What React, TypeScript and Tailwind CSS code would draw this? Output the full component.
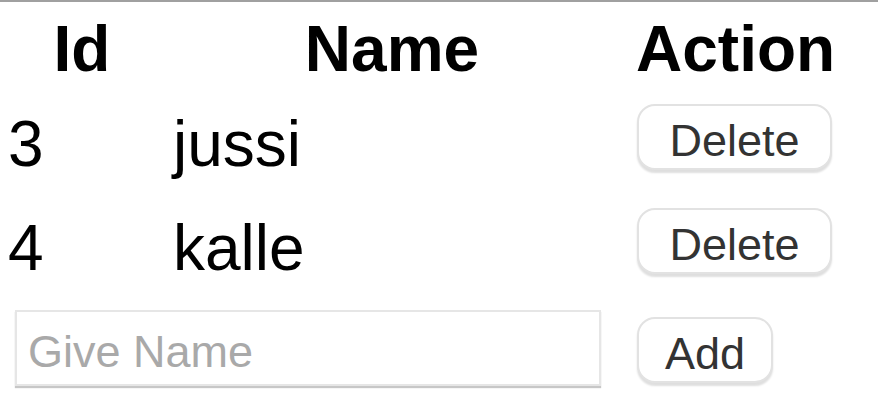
import React from "react";

const font = { fontFamily: '"Liberation Sans", Arial, sans-serif' };

function Btn({ label, w }: { label: string; w: string }) {
  return (
    <button
      className={`${w} h-[66px] rounded-[18px] border-2 border-[#e2e2e2] bg-white pt-[7px] text-[45px] leading-none text-[#333333] shadow-[0_3px_2px_rgba(0,0,0,0.13)] flex items-center justify-center`}
      style={font}
    >
      {label}
    </button>
  );
}

function Row({ id, name }: { id: string; name: string }) {
  return (
    <div className="flex h-[104px] items-start">
      <div className="w-[148px] ml-[8px] mt-[7px] text-[64px] leading-[74px] text-black">{id}</div>
      <div className="w-[438px] ml-[17px] mt-[7px] text-[64px] leading-[74px] text-black">{name}</div>
      <div className="ml-[26px] mt-[4px]">
        <Btn label="Delete" w="w-[195px]" />
      </div>
    </div>
  );
}

export default function App() {
  return (
    <div className="w-[878px] h-[420px] bg-white overflow-hidden" style={font}>
      <div className="h-[2px] bg-[#a0a0a0]" />
      <div className="flex h-[98px] pt-[10px] font-bold text-[64px] leading-[74px] text-black">
        <div className="w-[148px] ml-[8px] text-center">Id</div>
        <div className="w-[438px] ml-[17px] text-center">Name</div>
        <div className="w-[196px] ml-[25px] text-center">Action</div>
      </div>
      <Row id="3" name="jussi" />
      <Row id="4" name="kalle" />
      <div className="flex items-start">
        <input
          placeholder="Give Name"
          className="ml-[15px] mt-[2px] w-[586px] h-[76px] border-2 border-[#e6e6e6] bg-white pl-[11px] pt-[8px] text-[45px] text-black placeholder:text-[#a9a9a9] outline-none shadow-[0_2px_1px_rgba(0,0,0,0.22)]"
          style={font}
        />
        <div className="ml-[36px] mt-[9px]">
          <Btn label="Add" w="w-[136px]" />
        </div>
      </div>
    </div>
  );
}
